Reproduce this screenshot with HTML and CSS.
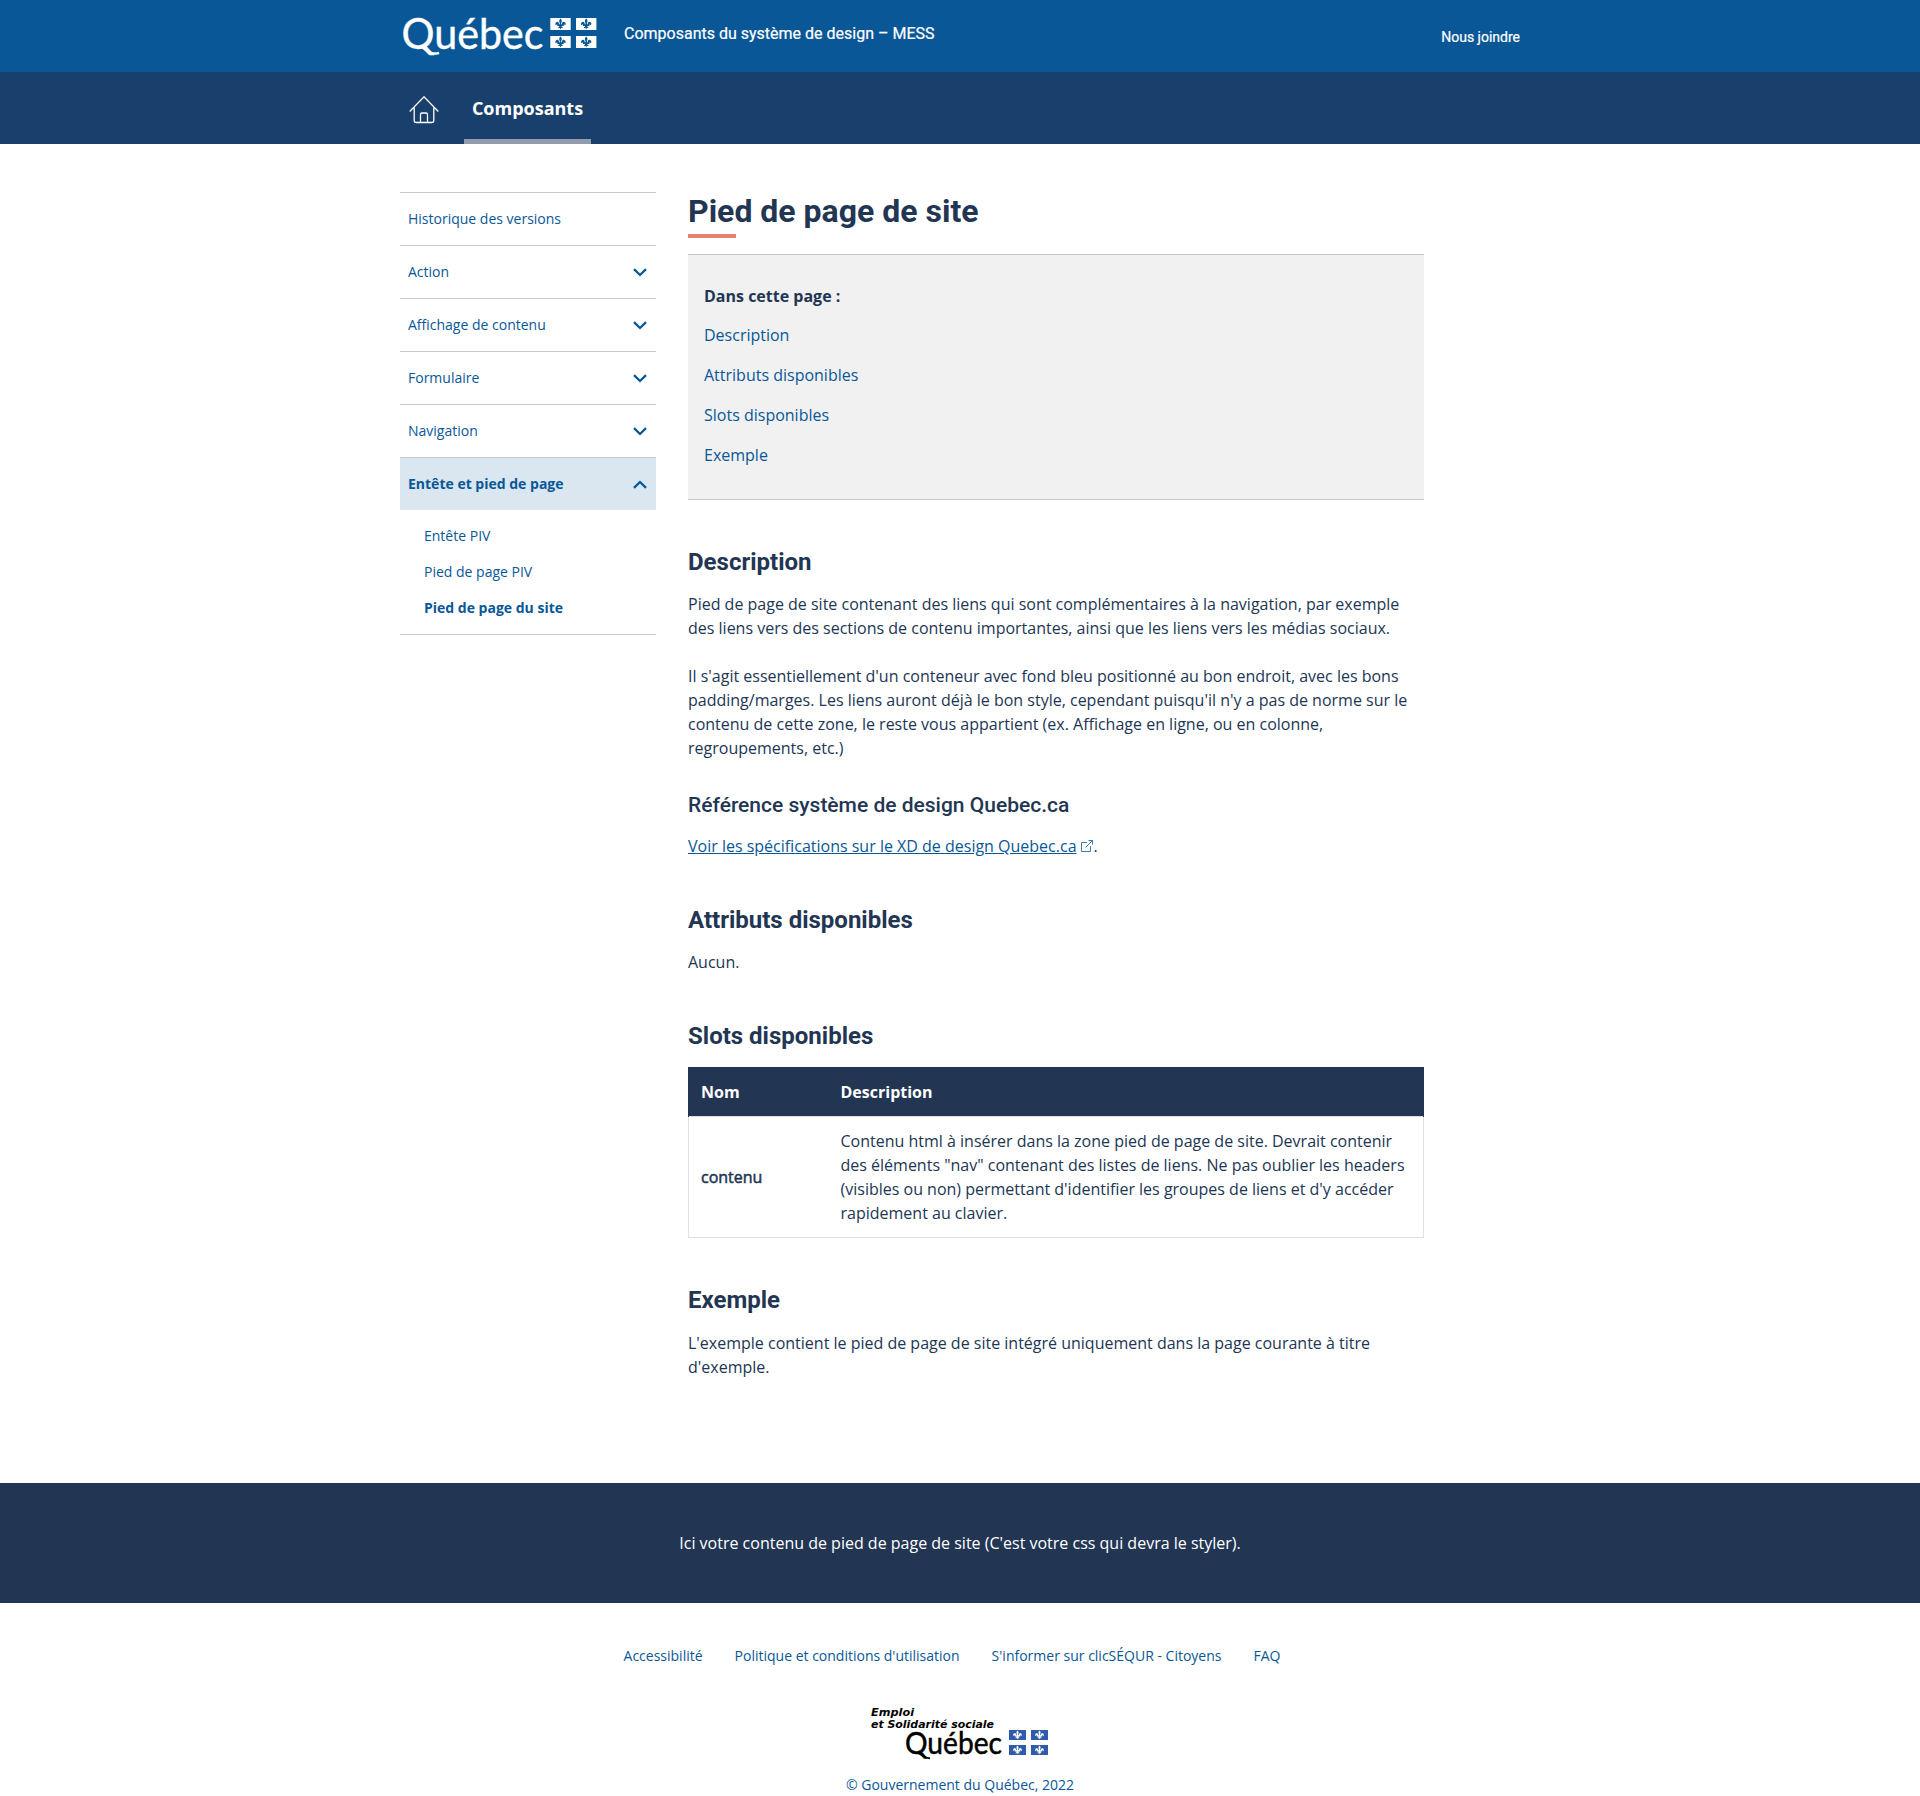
FILE: index.html
```html
<!DOCTYPE html>
<html lang="fr">
<head>
<meta charset="utf-8">
<title>Pied de page de site</title>
<link rel="stylesheet" href="styles.css">
</head>
<body>
<svg width="0" height="0" class="defs" aria-hidden="true">
  <symbol id="fleur" viewBox="0 0 20 12">
    <path d="M10 .6C8.600 2 8.300 3.200 9.300 5.300V6.300H8.500C8.600 4.300 7.600 3.500 6.300 3.900C4.700 4.300 4.300 6.200 5.500 7.600C5.600 6.700 6.100 6.300 6.800 6.500V7.900H8.900C8.700 8.900 8.200 9.300 7.300 9.500C8 10.200 8.800 10.100 9.300 9.700L10 11.500L10.700 9.700C11.200 10.100 12 10.200 12.700 9.500C11.800 9.300 11.300 8.900 11.100 7.900H13.200V6.500C13.900 6.300 14.400 6.700 14.500 7.600C15.700 6.200 15.300 4.300 13.700 3.900C12.400 3.500 11.400 4.300 11.500 6.300H10.700V5.300C11.700 3.200 11.400 2 10 .6Z"/>
  </symbol>
</svg>
<header>
  <div class="piv">
    <div class="container piv-row">
      <svg class="logo" width="200" height="72" role="img" aria-label="Québec">
        <text class="logo-word" x="1.500" y="48.500" textLength="142" lengthAdjust="spacingAndGlyphs">Québec</text>
        <path class="logo-tail" d="M20 46C25 48 28 53.500 34 53.600Q37 53.600 39 52.800"/>
        <path class="logo-flag" d="M150.300 18h20.400v12h-20.400zM176 18h20.400v12h-20.400zM150.300 36h20.400v12h-20.400zM176 36h20.400v12h-20.400z"/>
        <g class="logo-fleur">
          <use href="#fleur" x="150.500" y="18" width="20" height="12"/><use href="#fleur" x="176.200" y="18" width="20" height="12"/>
          <use href="#fleur" x="150.500" y="36" width="20" height="12"/><use href="#fleur" x="176.200" y="36" width="20" height="12"/>
        </g>
      </svg>
      <span class="piv-title">Composants du système de design – MESS</span>
      <a class="piv-link">Nous joindre</a>
    </div>
  </div>
  <nav class="topnav">
    <div class="container topnav-row">
      <svg class="home" width="30" height="28" viewBox="0 0 30 28"><path d="M.7 15.500 15 .8 29.300 15.500M5.200 11.500V24.500Q5.200 26.500 7.200 26.500H22.800Q24.800 26.500 24.800 24.500V11.500M11.500 26.500V18.500Q11.500 17 13 17H17Q18.500 17 18.500 18.500V26.500"/></svg>
      <a class="tab">Composants</a>
    </div>
  </nav>
</header>
<div class="container main">
  <nav class="side">
    <a class="item">Historique des versions</a>
    <a class="item">Action<svg class="chev" width="14" height="9"><path d="M1 1.200 7 7 13 1.200"/></svg></a>
    <a class="item">Affichage de contenu<svg class="chev" width="14" height="9"><path d="M1 1.200 7 7 13 1.200"/></svg></a>
    <a class="item">Formulaire<svg class="chev" width="14" height="9"><path d="M1 1.200 7 7 13 1.200"/></svg></a>
    <a class="item">Navigation<svg class="chev" width="14" height="9"><path d="M1 1.200 7 7 13 1.200"/></svg></a>
    <a class="item open">Entête et pied de page<svg class="chev" width="14" height="9"><path d="M1 7.800 7 2 13 7.800"/></svg></a>
    <div class="sub">
      <a>Entête PIV</a>
      <a>Pied de page PIV</a>
      <a class="current">Pied de page du site</a>
    </div>
  </nav>
  <main>
    <h1>Pied de page de site</h1>
    <div class="toc">
      <strong>Dans cette page :</strong>
      <a>Description</a>
      <a>Attributs disponibles</a>
      <a>Slots disponibles</a>
      <a>Exemple</a>
    </div>
    <h2>Description</h2>
    <p>Pied de page de site contenant des liens qui sont complémentaires à la navigation, par exemple des liens vers des sections de contenu importantes, ainsi que les liens vers les médias sociaux.</p>
    <p class="next">Il s'agit essentiellement d'un conteneur avec fond bleu positionné au bon endroit, avec les bons padding/marges. Les liens auront déjà le bon style, cependant puisqu'il n'y a pas de norme sur le contenu de cette zone, le reste vous appartient (ex. Affichage en ligne, ou en colonne, regroupements, etc.)</p>
    <h3>Référence système de design Quebec.ca</h3>
    <p><a class="link">Voir les spécifications sur le XD de design Quebec.ca</a><svg class="ext" width="12" height="12"><path d="M6 2.500H.5V11.500H9.500V6M7.500 .5H11.500V4.500M11.500 .5 4.500 7.500"/></svg>.</p>
    <h2>Attributs disponibles</h2>
    <p>Aucun.</p>
    <h2>Slots disponibles</h2>
    <table>
      <thead><tr><th class="name">Nom</th><th>Description</th></tr></thead>
      <tbody><tr><td class="slot">contenu</td><td>Contenu html à insérer dans la zone pied de page de site. Devrait contenir des éléments "nav" contenant des listes de liens. Ne pas oublier les headers (visibles ou non) permettant d'identifier les groupes de liens et d'y accéder rapidement au clavier.</td></tr></tbody>
    </table>
    <h2 class="last">Exemple</h2>
    <p>L'exemple contient le pied de page de site intégré uniquement dans la page courante à titre d'exemple.</p>
  </main>
</div>
<div class="site-footer">Ici votre contenu de pied de page de site (C'est votre css qui devra le styler).</div>
<footer class="piv-footer">
  <nav class="links"><a>Accessibilité</a><a>Politique et conditions d'utilisation</a><a>S'informer sur clicSÉQUR - Citoyens</a><a>FAQ</a></nav>
  <svg class="signature" width="180" height="60" viewBox="0 -6 180 60" role="img" aria-label="Emploi et Solidarité sociale Québec">
    <text class="ministry" x="1" y="8" textLength="43" lengthAdjust="spacingAndGlyphs">Emploi</text>
    <text class="ministry" x="1" y="20" textLength="123" lengthAdjust="spacingAndGlyphs">et Solidarité sociale</text>
    <text class="sig-word" x="35" y="46" textLength="97" lengthAdjust="spacingAndGlyphs">Québec</text>
    <path class="sig-tail" d="M48 45C52 46 54 50.500 60 50.200"/>
    <path class="sig-flag" d="M139 22h17v10h-17zM161 22h17v10h-17zM139 37h17v10h-17zM161 37h17v10h-17z"/>
    <g class="sig-fleur">
      <use href="#fleur" x="139" y="22" width="17" height="10"/><use href="#fleur" x="161" y="22" width="17" height="10"/>
      <use href="#fleur" x="139" y="37" width="17" height="10"/><use href="#fleur" x="161" y="37" width="17" height="10"/>
    </g>
  </svg>
  <a class="copy">© Gouvernement du Québec, 2022</a>
</footer>
</body>
</html>
```
FILE: styles.css
```css
* { box-sizing: border-box; }
body { margin: 0; background: #fff; color: #223654; font: 16px/24px "Open Sans", sans-serif; }
.defs { display: block; }
.container { width: 1120px; margin: 0 auto; }
.piv { background: #095797; color: #fff; font-family: Roboto, sans-serif; }
.piv-row { display: flex; height: 72px; }
.logo { flex: none; }
.logo-word { font: 43px Lato, sans-serif; fill: #fff; stroke: #fff; stroke-width: .4; }
.logo-tail { fill: none; stroke: #fff; stroke-width: 2.500; }
.logo-flag { fill: #fff; }
.logo-fleur { fill: #095797; }
.piv-title { margin: 22px 0 0 24px; -webkit-text-stroke: .2px #fff; }
.piv-link { margin: 25px 0 0 auto; font-size: 14px; -webkit-text-stroke: .2px #fff; }
.topnav { background: #19406c; }
.topnav-row { display: flex; height: 72px; }
.home { margin: 24px 0 0 9px; fill: none; stroke: #fff; stroke-width: 1.300; }
.tab { margin-left: 25px; width: 127px; padding-top: 24px; text-align: center; border-bottom: 5px solid #929cac; color: #fff; font-size: 18px; font-weight: 700; }
.main { display: flex; gap: 32px; align-items: flex-start; height: 1339px; padding-top: 48px; }
.side { width: 256px; border-bottom: 1px solid #c5cad2; font-size: 14px; color: #095797; }
.item { display: flex; align-items: center; justify-content: space-between; height: 53px; padding: 0 9px 0 8px; border-top: 1px solid #c5cad2; }
.chev { fill: none; stroke: #095797; stroke-width: 2.300; }
.open { background: #dae6f0; font-weight: 700; }
.sub { padding: 8px 24px; }
.sub a { display: block; line-height: 36px; }
.current { font-weight: 700; }
main { width: 736px; }
h1, h2, h3 { margin: 0; font-family: Roboto, sans-serif; }
h1 { font-size: 32px; line-height: 38px; }
h1::after { content: ""; display: block; width: 48px; height: 4px; margin-top: 4px; background: #e58271; }
.toc { display: flex; flex-direction: column; gap: 16px; height: 246px; margin: 16px 0 46px; padding: 29px 16px 0; background: #f1f1f2; border: solid #c5cad2; border-width: 1px 0; color: #095797; }
.toc strong { margin-bottom: -1px; color: #223654; }
h2 { margin-top: 48px; margin-bottom: 16px; font-size: 24px; line-height: 28px; }
.last { margin-bottom: 17px; }
h3 { margin: 32px 0 16px; font-size: 21px; line-height: 26px; font-weight: 500; }
p { margin: 0; }
.next { margin-top: 24px; }
.link { color: #095797; text-decoration: underline; }
.ext { margin: 0 1px 0 4px; fill: none; stroke: #3e7db3; }
table { width: 736px; margin-top: 17px; border-collapse: collapse; border: 1px solid #dfdfe8; }
th { padding: 12px; text-align: left; background: #223654; color: #fff; border-top: 1px solid #223654; }
th:first-child { border-left: 1px solid #223654; }
th:last-child { border-right: 1px solid #223654; }
td { padding: 12px; border-top: 1px solid #dfdfe8; }
.name { width: 140px; }
.slot { -webkit-text-stroke: .5px #223654; }
.site-footer { height: 120px; line-height: 120px; background: #223654; color: #fff; text-align: center; }
.piv-footer { display: flex; flex-direction: column; align-items: center; color: #095797; font-size: 14px; }
.links { display: flex; gap: 32px; margin: 41px 0 0; padding-right: 16px; }
.signature { margin-top: 34px; }
.ministry { font: italic 700 10px "DejaVu Sans", sans-serif; fill: #000; }
.sig-word { font: 31px Lato, sans-serif; fill: #000; stroke: #000; stroke-width: .5; }
.sig-tail { fill: none; stroke: #000; stroke-width: 2; }
.sig-flag { fill: #2f5caa; }
.sig-fleur { fill: #fff; }
.copy { margin-top: 11px; }
```
